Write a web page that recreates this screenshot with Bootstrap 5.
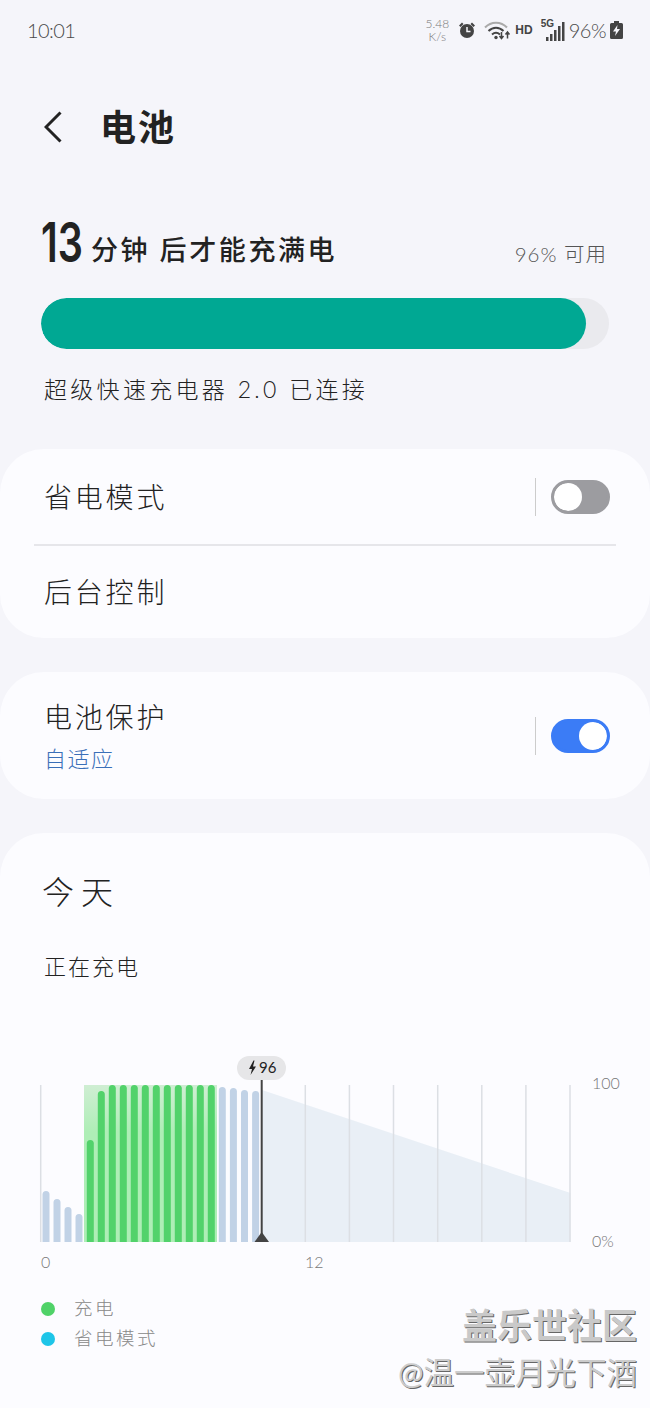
<!DOCTYPE html>
<html lang="zh-CN">
<head>
    <meta charset="UTF-8">
    <meta name="viewport" content="width=device-width, initial-scale=1.0">
    <title>电池</title>
    <link href="https://cdn.jsdelivr.net/npm/bootstrap@5.3.0/dist/css/bootstrap.min.css" rel="stylesheet">
    <style>
        html, body { height: 1408px; }
        body {
            background: #f5f5fa;
            color: #222;
            font-family: Lato, "Noto Sans CJK SC", sans-serif;
            font-weight: 300;
            overflow: hidden;
            position: relative;
        }
        .status-bar { height: 60px; padding: 0 27px 0 27px; color: #4a4a4a; }
        .status-time { font-size: 20px; letter-spacing: -.6px; }
        .speed-text { width: 26px; font-size: 12px; line-height: 13px; text-align: center; color: #777; }
        .hd-text { font: 700 12px "Liberation Sans", sans-serif; color: #444; }
        .fiveg-wrap { width: 24px; height: 22px; }
        .fiveg-text { position: absolute; left: 0; top: 0; font: 700 10px/9px "Liberation Sans", sans-serif; color: #444; }
        .status-pct { font-size: 20px; letter-spacing: -.5px; }
        .page-header { height: 76px; margin-top: 29px; padding-left: 44px; gap: 38px; }
        .page-title { font-size: 36px; font-weight: 700; letter-spacing: 2px; }
        .summary { padding: 53px 41px 0 41px; height: 284px; }
        .big-num { font: 600 55px/48px Inter, sans-serif; display: inline-block; transform: scaleX(.72); transform-origin: left; width: 41px; margin: 0 9px 4px 0; color: #222; }
        .eta-text { font-size: 27px; letter-spacing: 2.6px; font-weight: 500; }
        .avail-text { font-size: 20.5px; letter-spacing: 1px; color: #555; margin-right: 2px; }
        .charge-bar { height: 51px; margin-top: 28px; border-radius: 26px; background: #eaeaee; }
        .charge-bar .progress-bar { background: #00a893; border-radius: 26px; }
        .charger-text { font-size: 23px; letter-spacing: 3.3px; margin: 25px 0 0 3px; line-height: 30px; }
        .panel { background: #fcfcff; border-radius: 44px; border: 0; margin-bottom: 34px; }
        .panel-row { padding: 0 40px 0 44px; }
        .row-label { font-size: 28px; letter-spacing: 2.8px; line-height: 36px; }
        .row-sub { font-size: 22px; letter-spacing: 1.5px; line-height: 30px; margin-top: 9px; color: #3a6fb8; }
        .row-text { padding-top: 2px; }
        .row-rule { width: 1px; height: 38px; background: #ccc; margin-right: 15px; }
        .panel-line { margin: 0 34px; height: 2px; background: #e6e6ea; }
        .power-switch { padding: 0; margin: 0; min-height: 0; }
        .power-switch .form-check-input {
            width: 59px; height: 34px; margin: 0; float: none; display: block;
            background-color: #9c9ca0; border: 3px solid #9c9ca0; opacity: 1 !important;
            background-image: url("data:image/svg+xml,%3csvg xmlns='http://www.w3.org/2000/svg' viewBox='-4 -4 8 8'%3e%3ccircle r='4' fill='%23fff'/%3e%3c/svg%3e");
        }
        .power-switch .form-check-input:checked { background-color: #3b7cf6; border-color: #3b7cf6; }
        .today-panel { height: 640px; margin-bottom: 0; border-radius: 44px 44px 0 0; }
        .today-title { font-size: 32px; letter-spacing: 7px; line-height: 40px; margin: 39px 0 0 42px; }
        .today-sub { font-size: 22px; letter-spacing: 2px; line-height: 30px; margin: 40px 0 0 44px; }
        .chart-box { position: absolute; left: 0; top: 1050px; width: 650px; height: 230px; display: block; }
        .axis-text { font-family: Lato, sans-serif; font-size: 16px; font-weight: 300; fill: #777; }
        .pill-text { font-family: Lato, sans-serif; font-size: 15px; font-weight: 400; fill: #222; }
        .legend-wrap { position: absolute; left: 41px; top: 1294px; }
        .legend-row { height: 30px; gap: 19px; font-size: 18.5px; letter-spacing: 2.5px; color: #888; }
        .legend-dot { width: 14px; height: 14px; border-radius: 50%; }
        .mark-wrap { position: absolute; right: 13px; top: 1304px; text-align: right; color: #c9c9c9; }
        .mark-one { font-size: 35px; line-height: 42px; font-weight: 700; text-shadow: 1px 1px 0 #666; }
        .mark-two { font-size: 30.5px; line-height: 38px; margin-top: 7px; font-weight: 400; color: #ccc; text-shadow: 1px 1px 0 #666; }
    </style>
</head>
<body>
    <div class="status-bar d-flex align-items-center">
        <div class="status-time">10:01</div>
        <div class="ms-auto d-flex align-items-center">
            <div class="speed-text">5.48<br>K/s</div>
            <svg class="ms-2" width="18" height="18" viewBox="0 0 18 18" fill="#444">
                <circle cx="9" cy="10" r="7"/>
                <path d="M1 4.500 4 1.500 5.500 3 2.500 6zM17 4.500 14 1.500 12.500 3 15.500 6z"/>
                <path d="M9 6v4.500h3.500" stroke="#f5f5fa" stroke-width="1.500" fill="none"/>
            </svg>
            <svg class="ms-2" width="27" height="20" viewBox="0 0 27 20" fill="none">
                <path d="M1 7.500C7 1 17 1 23 7.500" stroke="#aaa" stroke-width="2"/>
                <path d="M4.500 11C9 6.500 15 6.500 19.500 11" stroke="#444" stroke-width="2"/>
                <path d="M8 14.500C10.500 12.300 13.500 12.300 16 14.500" stroke="#444" stroke-width="2"/>
                <circle cx="12" cy="17.500" r="1.700" fill="#444"/>
                <path d="M17.500 12v6M15.500 16l2 2.500 2-2.500M23.500 18.500v-6M21.500 14.500l2-2.500 2 2.500" stroke="#444" stroke-width="1.500"/>
            </svg>
            <div class="hd-text ms-1">HD</div>
            <div class="fiveg-wrap position-relative ms-2">
                <span class="fiveg-text">5G</span>
                <svg class="position-absolute top-0 start-0" width="24" height="22" viewBox="0 0 24 22" fill="#444">
                    <rect x="5" y="18" width="2.500" height="4"/>
                    <rect x="9" y="15" width="2.500" height="7"/>
                    <rect x="13" y="11" width="2.500" height="11"/>
                    <rect x="17" y="7" width="2.500" height="15"/>
                    <rect x="21" y="3" width="2.500" height="19"/>
                </svg>
            </div>
            <div class="status-pct ms-1">96%</div>
            <svg class="ms-1" width="13" height="18" viewBox="0 0 13 18" fill="#444">
                <path d="M4 0h5v2h2.500q1.500 0 1.500 1.500v13q0 1.500-1.500 1.500h-10q-1.500 0-1.500-1.500v-13q0-1.500 1.500-1.500H4z"/>
                <path d="M7.500 4 3 10.500h3L5 15l5-7H7z" fill="#f5f5fa"/>
            </svg>
        </div>
    </div>

    <div class="page-header d-flex align-items-center">
        <svg width="18" height="32" viewBox="0 0 18 32" fill="none">
            <path d="M16.500 1.500 2 16l14.500 14.500" stroke="#222" stroke-width="3"/>
        </svg>
        <div class="page-title">电池</div>
    </div>

    <div class="summary">
        <div class="d-flex align-items-end justify-content-between">
            <div class="d-flex align-items-end">
                <span class="big-num">13</span>
                <span class="eta-text">分钟 后才能充满电</span>
            </div>
            <span class="avail-text">96% 可用</span>
        </div>
        <div class="progress charge-bar">
            <div class="progress-bar" style="width: 96%"></div>
        </div>
        <div class="charger-text">超级快速充电器 2.0 已连接</div>
    </div>

    <div class="card panel">
        <div class="panel-row d-flex align-items-center" style="height: 95px">
            <div class="row-label">省电模式</div>
            <div class="row-rule ms-auto"></div>
            <div class="form-check form-switch power-switch">
                <input class="form-check-input" type="checkbox" role="switch" aria-label="省电模式">
            </div>
        </div>
        <div class="panel-line"></div>
        <div class="panel-row d-flex align-items-center" style="height: 92px">
            <div class="row-label">后台控制</div>
        </div>
    </div>

    <div class="card panel">
        <div class="panel-row d-flex align-items-center" style="height: 127px">
            <div class="row-text">
                <div class="row-label">电池保护</div>
                <div class="row-sub">自适应</div>
            </div>
            <div class="row-rule ms-auto"></div>
            <div class="form-check form-switch power-switch">
                <input class="form-check-input" type="checkbox" role="switch" aria-label="电池保护" checked>
            </div>
        </div>
    </div>

    <div class="card panel today-panel">
        <div class="today-title">今天</div>
        <div class="today-sub">正在充电</div>
    </div>

    <svg class="chart-box" id="chart" viewBox="0 1050 650 230"></svg>

    <div class="legend-wrap">
        <div class="legend-row d-flex align-items-center">
            <span class="legend-dot" style="background: #50d268"></span><span>充电</span>
        </div>
        <div class="legend-row d-flex align-items-center">
            <span class="legend-dot" style="background: #1ec5e8"></span><span>省电模式</span>
        </div>
    </div>

    <div class="mark-wrap">
        <div class="mark-one">盖乐世社区</div>
        <div class="mark-two">@温一壶月光下酒</div>
    </div>

    <script src="https://cdn.jsdelivr.net/npm/bootstrap@5.3.0/dist/js/bootstrap.bundle.min.js"></script>
    <script>
        const base = 1242;
        // [center x, top y, color] for each hour bar
        const blue = '#c1d2e6', green = '#52d26b';
        const bars = [
            [46, 1191, blue], [57, 1199, blue], [68, 1207, blue], [79, 1214, blue],
            [90.3, 1140, green], [101.3, 1091, green]
        ];
        for (let i = 0; i < 10; i++) bars.push([112.3 + i * 11, 1085, green]);
        [1087, 1088, 1090, 1091].forEach((top, i) => bars.push([222.3 + i * 11.1, top, blue]));

        let html = `
            <defs>
                <linearGradient id="chargeFill" x1="0" y1="0" x2="0" y2="1">
                    <stop offset="0" stop-color="#cfeed3"/>
                    <stop offset=".12" stop-color="#c2eec8"/>
                    <stop offset=".3" stop-color="#aeeeb6"/>
                    <stop offset="1" stop-color="#aeeeb6"/>
                </linearGradient>
            </defs>
            <polygon points="262,1090 570.500,1193 570.500,${base} 262,${base}" fill="#e9eff6"/>
            <rect x="84" y="1085" width="133" height="157" fill="url(#chargeFill)"/>`;

        [40.7, 305.3, 349.4, 393.5, 437.7, 481.8, 525.9, 570].forEach(x => {
            html += `<line x1="${x}" x2="${x}" y1="1085" y2="${base}" stroke="#dcdfe4" stroke-width="1.500"/>`;
        });
        bars.forEach(([x, top, color]) => {
            html += `<path d="M${x - 3.5} ${base}V${top + 3.5}a3.500 3.500 0 0 1 7 0V${base}z" fill="${color}"/>`;
        });
        html += `
            <line x1="261.700" x2="261.700" y1="1078" y2="${base}" stroke="#444" stroke-width="2"/>
            <polygon points="254.500,${base} 269,${base} 261.700,1232" fill="#444"/>
            <rect x="237" y="1056" width="49" height="24" rx="12" fill="#e6e6e8"/>
            <path d="M253.500 1060.500 249 1069h3l-1.500 6 5.500-8.500h-3l1.500-6z" fill="#222"/>
            <text class="pill-text" x="259" y="1073">96</text>
            <text class="axis-text" x="41" y="1268">0</text>
            <text class="axis-text" x="305" y="1268">12</text>
            <text class="axis-text" x="592" y="1089">100</text>
            <text class="axis-text" x="592" y="1247">0%</text>`;
        document.getElementById('chart').innerHTML = html;
    </script>
</body>
</html>
